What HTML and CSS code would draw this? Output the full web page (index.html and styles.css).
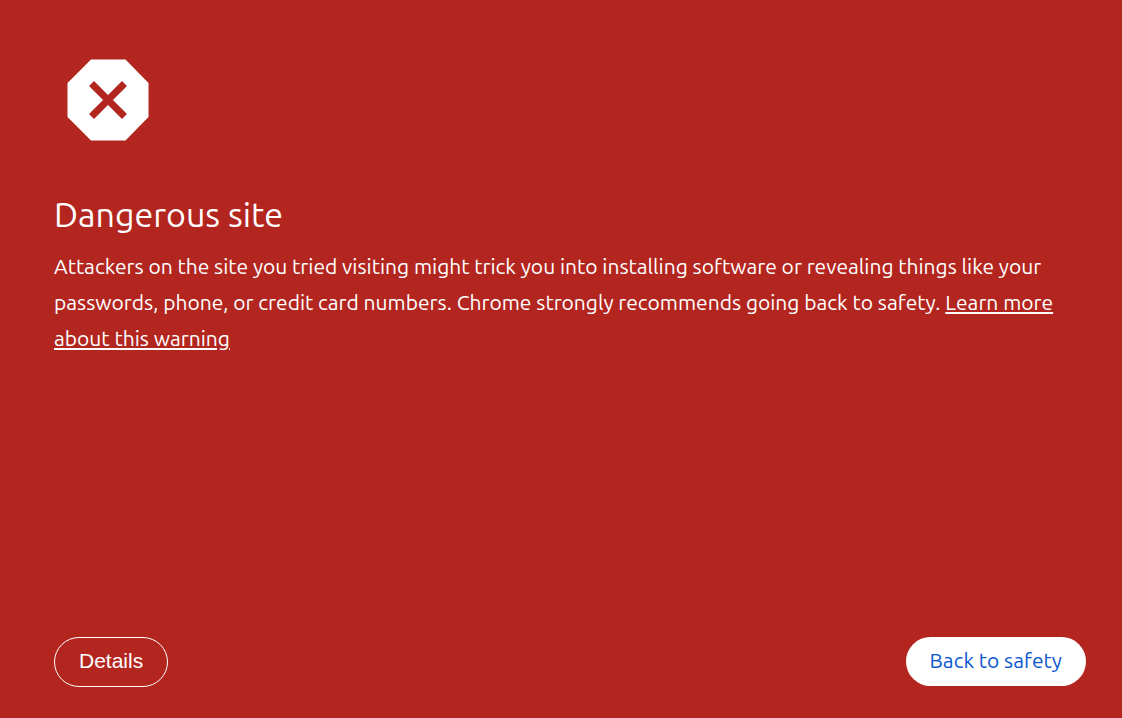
FILE: index.html
```html
<!DOCTYPE html>
<html lang="en">
<head>
<meta charset="utf-8">
<meta name="viewport" content="width=device-width, initial-scale=1">
<title>Security error</title>
<link rel="stylesheet" href="styles.css">
</head>
<body class="page">
<main class="message">
<svg class="icon" viewBox="0 0 108 108" aria-hidden="true"><path fill="#fff" d="M37 13.500h34.500L94.500 37v34L71.500 94.500H37L13.500 71V37z"/><path fill="none" stroke="#b3261f" stroke-width="7" d="M37.500 37.500l33 33M70.500 37.500l-33 33"/></svg>
<h1 class="title">Dangerous site</h1>
<p class="text">Attackers on the site you tried visiting might trick you into installing software or revealing things like your passwords, phone, or credit card numbers. Chrome strongly recommends going back to safety. <a class="link" href="#">Learn more about this warning</a></p>
</main>
<div class="actions">
<button class="button details" type="button">Details</button>
<button class="button primary" type="button">Back to safety</button>
</div>
</body>
</html>
```
FILE: styles.css
```css
* { box-sizing: border-box; }
.page {
  display: flex;
  flex-direction: column;
  justify-content: space-between;
  min-height: 100vh;
  margin: 0;
  padding: 46px 36px 31px 54px;
  background: #b3261f;
  color: #fff;
  font-family: Ubuntu, "Noto Sans", "Open Sans", sans-serif;
}
.icon { display: block; width: 108px; height: 108px; }
.title { margin: 36px 0 10px; font-size: 34px; font-weight: 400; line-height: 48px; }
.text { margin: 0; font-size: 21px; line-height: 36px; }
.link { color: inherit; }
.actions { display: flex; justify-content: space-between; align-items: flex-start; }
.button { height: 50px; padding: 0 24px 2px; border: 1px solid #fff; border-radius: 25px; font-size: 21px; }
.details { background: transparent; color: #fff; font-family: "Liberation Sans", Arial, sans-serif; }
.primary { height: 49px; padding-bottom: 3px; border: 0; background: #fff; color: #0b57d0; font-family: inherit; }
```
